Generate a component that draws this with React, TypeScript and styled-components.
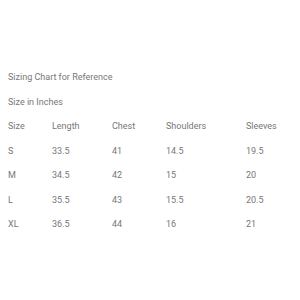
import React from 'react';
import styled, { createGlobalStyle } from 'styled-components';

const GlobalStyle = createGlobalStyle`
  body {
    margin: 0;
    background: #ffffff;
    font-family: Roboto, "Liberation Sans", sans-serif;
  }
`;

const Page = styled.div`
  padding: 70px 8px 0 8px;
  color: #777777;
  font-size: 9px;
`;

const Caption = styled.div`
  height: 24.5px;
  line-height: 14px;
`;

const Table = styled.div`
  display: grid;
  grid-template-columns: 44px 60px 54px 80px 1fr;
  grid-auto-rows: 24.5px;
`;

const Cell = styled.div`
  line-height: 14px;
`;

const head = ['Size', 'Length', 'Chest', 'Shoulders', 'Sleeves'];
const rows = [
  ['S', '33.5', '41', '14.5', '19.5'],
  ['M', '34.5', '42', '15', '20'],
  ['L', '35.5', '43', '15.5', '20.5'],
  ['XL', '36.5', '44', '16', '21'],
];

const App: React.FC = () => {
  return (
    <>
      <GlobalStyle />
      <Page>
        <Caption>Sizing Chart for Reference</Caption>
        <Caption>Size in Inches</Caption>
        <Table>
          {head.map((h) => (
            <Cell key={h}>{h}</Cell>
          ))}
          {rows.map((r) =>
            r.map((c, i) => <Cell key={r[0] + i}>{c}</Cell>)
          )}
        </Table>
      </Page>
    </>
  );
};

export default App;
